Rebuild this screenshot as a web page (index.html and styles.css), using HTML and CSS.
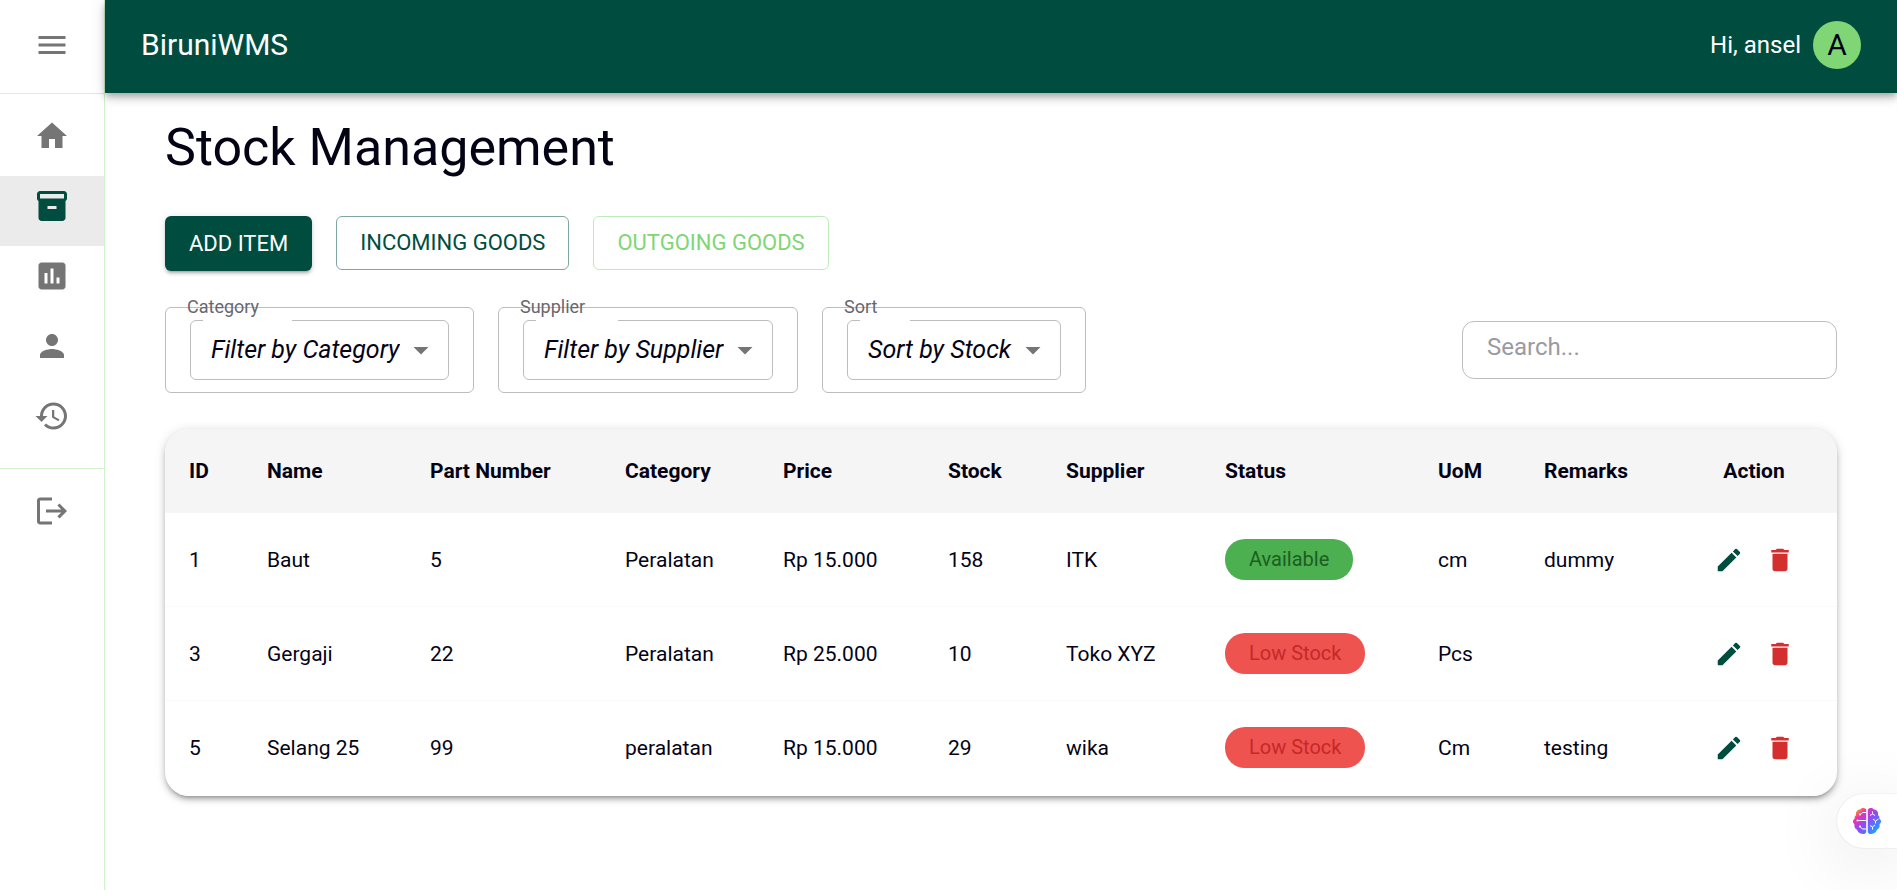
FILE: index.html
```html
<!DOCTYPE html>
<html lang="en">
<head>
<meta charset="utf-8">
<meta name="viewport" content="width=device-width, initial-scale=1">
<title>BiruniWMS - Stock Management</title>
<link rel="stylesheet" href="styles.css">
</head>
<body>
<svg class="sprite" aria-hidden="true">
  <symbol id="edit" viewBox="0 0 24 24"><path d="M3 17.25V21h3.75L17.81 9.94l-3.75-3.75L3 17.25zM20.71 7.04c.39-.39.39-1.02 0-1.41l-2.34-2.34a.9959.9959 0 0 0-1.41 0l-1.83 1.83 3.75 3.75 1.83-1.83z"/></symbol>
  <symbol id="delete" viewBox="0 0 24 24"><path d="M6 19c0 1.1.9 2 2 2h8c1.1 0 2-.9 2-2V7H6v12zM19 4h-3.5l-1-1h-5l-1 1H5v2h14V4z"/></symbol>
  <symbol id="caret" viewBox="0 0 24 24"><path d="M7 10l5 5 5-5z"/></symbol>
</svg>
<div class="app">
  <aside class="sidebar">
    <div class="sidebar-top">
      <button class="menu-toggle" type="button" aria-label="Toggle menu"><svg class="nav-icon" viewBox="0 0 24 24"><path d="M3 18h18v-2H3v2zm0-5h18v-2H3v2zm0-7v2h18V6H3z"/></svg></button>
    </div>
    <nav aria-label="Main">
      <div class="nav-group">
        <a class="nav-item" href="#" aria-label="Home"><svg class="nav-icon" viewBox="0 0 24 24"><path d="M10 20v-6h4v6h5v-8h3L12 3 2 12h3v8z"/></svg></a>
        <a class="nav-item active" href="#" aria-label="Stock" aria-current="page"><svg class="nav-icon" viewBox="0 0 24 24"><path d="M20 2H4c-1 0-2 .9-2 2v3.01c0 .72.43 1.34 1 1.69V20c0 1.1 1.1 2 2 2h14c.9 0 2-.9 2-2V8.7c.57-.35 1-.97 1-1.69V4c0-1.1-1-2-2-2zm-5 12H9v-2h6v2zm5-7H4V4h16v3z"/></svg></a>
        <a class="nav-item" href="#" aria-label="Reports"><svg class="nav-icon" viewBox="0 0 24 24"><path d="M19 3H5c-1.1 0-2 .9-2 2v14c0 1.1.9 2 2 2h14c1.1 0 2-.9 2-2V5c0-1.1-.9-2-2-2zM9 17H7v-7h2v7zm4 0h-2V7h2v10zm4 0h-2v-4h2v4z"/></svg></a>
        <a class="nav-item" href="#" aria-label="Users"><svg class="nav-icon" viewBox="0 0 24 24"><path d="M12 12c2.21 0 4-1.79 4-4s-1.79-4-4-4-4 1.79-4 4 1.79 4 4 4zm0 2c-2.67 0-8 1.34-8 4v2h16v-2c0-2.66-5.33-4-8-4z"/></svg></a>
        <a class="nav-item" href="#" aria-label="History"><svg class="nav-icon" viewBox="0 0 24 24"><path d="M13 3c-4.97 0-9 4.03-9 9H1l3.89 3.89.07.14L9 12H6c0-3.87 3.13-7 7-7s7 3.13 7 7-3.13 7-7 7c-1.93 0-3.68-.79-4.94-2.06l-1.42 1.42C8.27 19.99 10.51 21 13 21c4.97 0 9-4.03 9-9s-4.03-9-9-9zm-1 5v5l4.28 2.54.72-1.21-3.5-2.08V8H12z"/></svg></a>
      </div>
      <div class="nav-group">
        <a class="nav-item" href="#" aria-label="Log out"><svg class="nav-icon" viewBox="0 0 24 24"><path d="m17 7-1.41 1.41L18.17 11H8v2h10.17l-2.58 2.58L17 17l5-5zM4 5h8V3H4c-1.1 0-2 .9-2 2v14c0 1.1.9 2 2 2h8v-2H4z"/></svg></a>
      </div>
    </nav>
  </aside>
  <div class="page">
    <header class="topbar">
      <span class="brand">BiruniWMS</span>
      <div class="user"><span>Hi, ansel</span><span class="avatar">A</span></div>
    </header>
    <main class="content">
      <h1>Stock Management</h1>
      <div class="actions">
        <button class="btn btn-solid" type="button">ADD ITEM</button>
        <button class="btn btn-outline" type="button">INCOMING GOODS</button>
        <button class="btn btn-outline btn-light" type="button">OUTGOING GOODS</button>
      </div>
      <div class="toolbar">
        <div class="filter filter-category">
          <label for="category">Category</label>
          <div class="select-box"><select id="category"><option>Filter by Category</option></select><svg class="caret" aria-hidden="true"><use href="#caret"/></svg></div>
        </div>
        <div class="filter filter-supplier">
          <label for="supplier">Supplier</label>
          <div class="select-box"><select id="supplier"><option>Filter by Supplier</option></select><svg class="caret" aria-hidden="true"><use href="#caret"/></svg></div>
        </div>
        <div class="filter filter-sort">
          <label for="sort">Sort</label>
          <div class="select-box"><select id="sort"><option>Sort by Stock</option></select><svg class="caret" aria-hidden="true"><use href="#caret"/></svg></div>
        </div>
        <input class="search" type="text" placeholder="Search..." aria-label="Search">
      </div>
      <div class="card">
        <table>
          <colgroup>
            <col class="col-id"><col class="col-name"><col class="col-part"><col class="col-category"><col class="col-price"><col class="col-stock"><col class="col-supplier"><col class="col-status"><col class="col-uom"><col class="col-remarks"><col class="col-action">
          </colgroup>
          <thead>
            <tr><th>ID</th><th>Name</th><th>Part Number</th><th>Category</th><th>Price</th><th>Stock</th><th>Supplier</th><th>Status</th><th>UoM</th><th>Remarks</th><th class="center">Action</th></tr>
          </thead>
          <tbody>
            <tr><td>1</td><td>Baut</td><td>5</td><td>Peralatan</td><td>Rp 15.000</td><td>158</td><td>ITK</td><td><span class="chip chip-ok">Available</span></td><td>cm</td><td>dummy</td>
              <td><div class="row-actions"><button class="icon-btn edit" type="button" aria-label="Edit Baut"><svg><use href="#edit"/></svg></button><button class="icon-btn delete" type="button" aria-label="Delete Baut"><svg><use href="#delete"/></svg></button></div></td></tr>
            <tr><td>3</td><td>Gergaji</td><td>22</td><td>Peralatan</td><td>Rp 25.000</td><td>10</td><td>Toko XYZ</td><td><span class="chip chip-low">Low Stock</span></td><td>Pcs</td><td></td>
              <td><div class="row-actions"><button class="icon-btn edit" type="button" aria-label="Edit Gergaji"><svg><use href="#edit"/></svg></button><button class="icon-btn delete" type="button" aria-label="Delete Gergaji"><svg><use href="#delete"/></svg></button></div></td></tr>
            <tr><td>5</td><td>Selang 25</td><td>99</td><td>peralatan</td><td>Rp 15.000</td><td>29</td><td>wika</td><td><span class="chip chip-low">Low Stock</span></td><td>Cm</td><td>testing</td>
              <td><div class="row-actions"><button class="icon-btn edit" type="button" aria-label="Edit Selang 25"><svg><use href="#edit"/></svg></button><button class="icon-btn delete" type="button" aria-label="Delete Selang 25"><svg><use href="#delete"/></svg></button></div></td></tr>
          </tbody>
        </table>
      </div>
    </main>
  </div>
</div>
<button class="assistant" type="button" aria-label="Assistant">
  <svg viewBox="0 0 28 28">
    <defs>
      <linearGradient id="brain" x1="0" y1="0" x2="1" y2="1"><stop offset=".1" stop-color="#f9a11b"/><stop offset=".27" stop-color="#ee2fb8"/><stop offset=".52" stop-color="#8b4df5"/><stop offset=".82" stop-color="#2e96ff"/></linearGradient>
    </defs>
    <path fill="url(#brain)" d="M13.2 2.500C12.200.6 8.600.3 7.400 2.300 4.200 2.600 2.300 5 3 8.200 1.500 9.200 1.300 10.600 1.700 11.800-.6 13-.5 16 1.500 17.300 1 20 2 22 4 22.700 4.900 25.400 7.200 26.800 8.900 26.800 11 27.500 12.800 26.600 13.200 25ZM14.800 2.500C15.800.6 19.400.3 20.600 2.300 23.800 2.600 25.700 5 25 8.200 26.500 9.200 26.700 10.600 26.300 11.800 28.600 13 28.500 16 26.500 17.300 27 20 26 22 24 22.700 23.100 25.400 20.800 26.800 19.100 26.800 17 27.500 15.200 26.600 14.800 25Z"/>
    <g fill="none" stroke="#fff" stroke-width="1"><path d="M13.200 5.500H10C8.500 5.500 8.500 7.500 7 7.500M13.200 13.500H4.500M13.200 22H10C8.500 22 8 20.500 7 19.500M17 8.500l2.500-1.500 2.500 1.500M19.500 7V4.500M20 12l2.500 2 3-2M22.500 14v2.500M17 18.500l2.500 1.500 2.500-2M19.500 20v2.500"/></g>
    <g fill="#fff"><circle cx="7" cy="7.500" r="1"/><circle cx="4.500" cy="13.500" r="1"/><circle cx="7" cy="19.500" r="1"/></g>
  </svg>
</button>
</body>
</html>
```
FILE: styles.css
```css
:root {
  --green: #004d40;
  --light-green: #80d674;
  --line: #d0f2cc;
  --ink: #040316;
}
* { box-sizing: border-box; }
body {
  margin: 0;
  background: #fff;
  color: var(--ink);
  font-family: Roboto, "Liberation Sans", sans-serif;
  font-size: 21px;
}
button, input, select { font: inherit; color: inherit; }
button { cursor: pointer; }
.sprite { display: none; }

.app {
  display: grid;
  grid-template-columns: 105px 1fr;
  min-height: 100vh;
}

/* Sidebar */
.sidebar { border-right: 1px solid var(--line); }
.sidebar-top {
  display: flex;
  justify-content: center;
  height: 94px;
  padding-top: 27px;
  border-bottom: 1px solid var(--line);
}
.menu-toggle {
  align-self: flex-start;
  padding: 0;
  border: 0;
  background: none;
}
.nav-icon {
  display: block;
  width: 36px;
  height: 36px;
  fill: #757575;
}
.nav-group { padding: 12px 0; }
.nav-group + .nav-group { border-top: 1px solid var(--line); }
.nav-item {
  display: flex;
  justify-content: center;
  padding: 12px 0 22px;
}
.nav-item.active { background: #ebebeb; }
.nav-item.active .nav-icon { fill: var(--green); }

/* Top bar */
.topbar {
  position: relative;
  display: flex;
  align-items: center;
  justify-content: space-between;
  height: 93px;
  padding: 0 36px 3px;
  background: var(--green);
  color: #fff;
  box-shadow: 0 3px 6px -1px rgba(0, 0, 0, .2), 0 6px 8px rgba(0, 0, 0, .14), 0 1px 15px rgba(0, 0, 0, .12);
}
.brand {
  padding-bottom: 2px;
  font-size: 30px;
}
.user {
  display: flex;
  align-items: center;
  gap: 12px;
  font-size: 24px;
}
.avatar {
  display: grid;
  place-items: center;
  width: 48px;
  height: 48px;
  padding-bottom: 2px;
  border-radius: 50%;
  background: var(--light-green);
  color: var(--ink);
  font-size: 30px;
}

/* Content */
.content { padding: 24px 60px; }
h1 {
  margin: 0 0 38px;
  font-size: 52px;
  font-weight: 400;
  line-height: 61px;
}
.actions {
  display: flex;
  align-items: flex-start;
  gap: 24px;
  margin-bottom: 36px;
}
.btn {
  padding: 9px 24px;
  border: 0;
  border-radius: 6px;
  font-size: 22px;
  line-height: 37px;
}
.btn-solid {
  background: var(--green);
  color: #fff;
  box-shadow: 0 4px 2px -3px rgba(0, 0, 0, .2), 0 3px 3px rgba(0, 0, 0, .14), 0 1px 7px rgba(0, 0, 0, .12);
}
.btn-outline {
  padding: 8px 23px;
  border: 1px solid #80a69f;
  background: none;
  color: var(--green);
  line-height: 36px;
}
.btn-light {
  border-color: #bfeab9;
  color: var(--light-green);
}

/* Filters */
.toolbar {
  display: flex;
  align-items: center;
  gap: 24px;
  margin-bottom: 36px;
}
.filter {
  position: relative;
  padding: 12px 24px;
  border: 1px solid #bdbdc0;
  border-radius: 6px;
}
.filter label {
  position: absolute;
  top: -15px;
  left: 21px;
  color: #68676f;
  font-size: 18px;
  line-height: 27px;
}
.select-box {
  position: relative;
  border: 1px solid #bdbdc0;
  border-radius: 6px;
}
/* Gap in the top border of the select box */
.select-box::before {
  content: "";
  position: absolute;
  top: -1px;
  left: 12px;
  width: var(--notch);
  height: 1px;
  background: #fff;
}
.filter-category { --notch: 89px; }
.filter-supplier { --notch: 82px; }
.filter-sort { --notch: 50px; }
.filter select {
  display: block;
  height: 58px;
  padding: 0 48px 2px 20px;
  border: 0;
  appearance: none;
  background: none;
  font-size: 25px;
  font-style: italic;
}
.filter-category select { min-width: 257px; }
.filter-supplier select { min-width: 248px; }
.filter-sort select { min-width: 212px; }
.caret {
  position: absolute;
  top: 11px;
  right: 9px;
  width: 36px;
  height: 36px;
  fill: #757575;
  pointer-events: none;
}
.search {
  width: 375px;
  height: 58px;
  margin-left: auto;
  padding: 0 24px 6px;
  border: 1px solid #bdbdc0;
  border-radius: 12px;
  background: none;
  font-size: 24px;
}
.search::placeholder { color: #9b9aa2; opacity: 1; }

/* Table */
.card {
  overflow: hidden;
  border-radius: 24px;
  background: #fff;
  box-shadow: 0 4px 4px -3px rgba(0, 0, 0, .3), 0 4px 6px rgba(0, 0, 0, .18), 0 1px 12px rgba(0, 0, 0, .12);
}
table {
  width: 100%;
  border-collapse: separate;
  border-spacing: 0;
}
.col-id { width: 78px; }
.col-name { width: 163px; }
.col-part { width: 195px; }
.col-category { width: 158px; }
.col-price { width: 165px; }
.col-stock { width: 118px; }
.col-supplier { width: 159px; }
.col-status { width: 213px; }
.col-uom { width: 106px; }
.col-remarks { width: 151px; }
.col-action { width: 166px; }
th, td {
  padding: 24px;
  text-align: left;
  white-space: nowrap;
}
th {
  background: #f5f5f5;
  font-weight: 700;
  line-height: 36px;
}
td { border-bottom: 1px solid #fafafa; }
th.center { text-align: center; }
tr:last-child td { border-bottom: 2px solid #fff; }
.chip {
  display: inline-block;
  padding: 0 24px 1px;
  border-radius: 20px;
  font-size: 20px;
  line-height: 40px;
  vertical-align: middle;
}
.chip-ok { background: #4caf50; color: #1b5e20; }
.chip-low { background: #ef5350; color: #c62828; }
.row-actions {
  display: flex;
  justify-content: center;
  gap: 6px;
}
.icon-btn {
  display: block;
  padding: 8px 7px 7px 8px;
  border: 0;
  background: none;
}
.icon-btn svg {
  display: block;
  width: 30px;
  height: 30px;
  fill: currentColor;
}
.icon-btn.edit { color: var(--green); }
.icon-btn.delete { color: #d32f2f; }

/* Assistant tab pinned to the window's edge */
.assistant {
  position: fixed;
  right: 0;
  bottom: 42px;
  width: 60px;
  height: 54px;
  padding: 0 0 0 16px;
  border: 0;
  border-radius: 27px 0 0 27px;
  background: #fff;
  box-shadow: 0 0 2px rgba(0, 0, 0, .14), 0 12px 72px rgba(0, 0, 0, .12);
}
.assistant svg {
  display: block;
  width: 28px;
  height: 28px;
}
```
